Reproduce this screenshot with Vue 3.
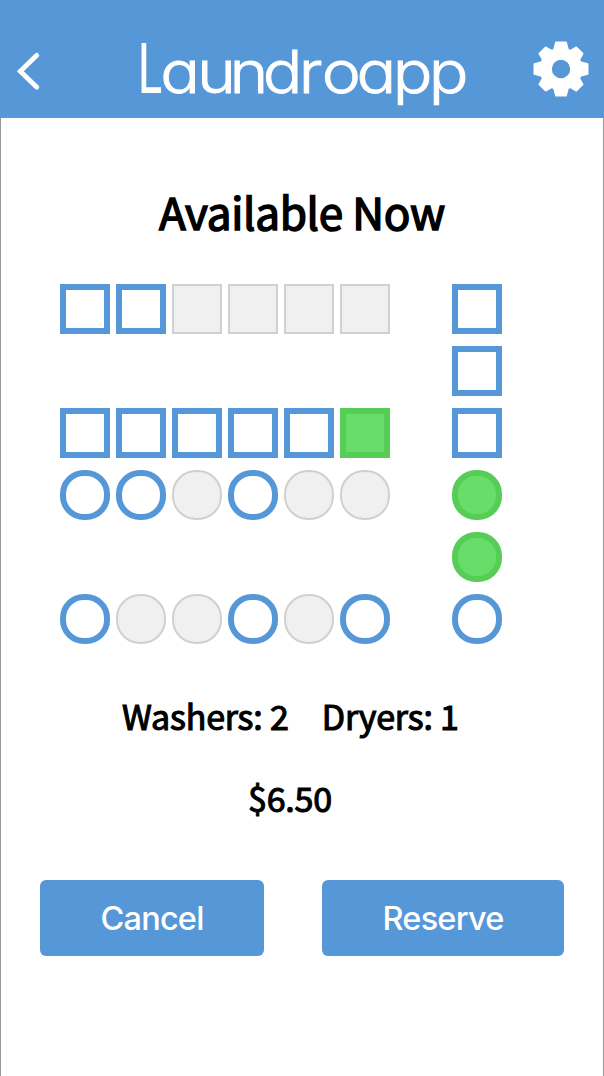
<script setup>
const machineRows = [
  { shape: 'square', states: ['open', 'open', 'busy', 'busy', 'busy', 'busy', 'gap', 'open'] },
  { shape: 'square', states: ['gap', 'gap', 'gap', 'gap', 'gap', 'gap', 'gap', 'open'] },
  { shape: 'square', states: ['open', 'open', 'open', 'open', 'open', 'picked', 'gap', 'open'] },
  { shape: 'round', states: ['open', 'open', 'busy', 'open', 'busy', 'busy', 'gap', 'picked'] },
  { shape: 'round', states: ['gap', 'gap', 'gap', 'gap', 'gap', 'gap', 'gap', 'picked'] },
  { shape: 'round', states: ['open', 'busy', 'busy', 'open', 'busy', 'open', 'gap', 'open'] },
]
</script>

<template>
  <div class="screen">
    <header class="bar">
      <svg class="back" width="24" height="40" viewBox="0 0 24 40">
        <path d="M20.8 4.3 L4.3 20.3 L20.8 36.3" />
      </svg>
      <svg class="logo" width="340" height="80" viewBox="0 0 340 80">
        <text class="cap" transform="translate(3.2 63) scale(0.69 1)">L</text>
        <text class="rest" transform="translate(0.8 62.8) scale(1.12 1)" x="22.7 55.6 84.6 114.3 146.4 167 197.9 230.3 262.5">aundroapp</text>
      </svg>
      <svg class="gear" width="56" height="56" viewBox="-84 -84 168 168">
        <path fill-rule="evenodd" d="M-21 -58 L-15 -80 L15 -80 L21 -58 L28 -55 L46 -65 L65 -46 L55 -28 L58 -21 L80 -15 L80 15 L58 21 L55 28 L65 46 L46 65 L28 55 L21 58 L15 80 L-15 80 L-21 58 L-28 55 L-46 65 L-65 46 L-55 28 L-58 21 L-80 15 L-80 -15 L-58 -21 L-55 -28 L-65 -46 L-46 -65 L-28 -55 Z M30 0 A30 30 0 1 0 -30 0 A30 30 0 1 0 30 0 Z" />
      </svg>
    </header>
    <main class="content">
      <h1>Available Now</h1>
      <div class="machines">
        <div v-for="(row, r) in machineRows" :key="r" class="row">
          <span v-for="(state, c) in row.states" :key="c" :class="['machine', row.shape, state]"></span>
        </div>
      </div>
      <div class="summary">
        <span>Washers: 2</span>
        <span>Dryers: 1</span>
      </div>
      <div class="price">$6.50</div>
      <div class="actions">
        <button class="cancel">Cancel</button>
        <button class="reserve">Reserve</button>
      </div>
    </main>
  </div>
</template>

<style>
body { margin: 0; background: #fff; }
</style>

<style scoped>
.screen {
  width: 604px;
  height: 1076px;
  display: flex;
  flex-direction: column;
  overflow: hidden;
  font-family: "Noto Sans CJK JP", "Noto Sans", sans-serif;
  color: #000;
}
.bar {
  height: 118px;
  flex: none;
  box-sizing: border-box;
  display: flex;
  align-items: flex-start;
  background: #5697d7;
}
.bar svg { display: block; flex: none; overflow: visible; }
.back { margin: 51px 0 0 16px; }
.back path { fill: none; stroke: #fff; stroke-width: 4.8; stroke-linecap: round; stroke-linejoin: miter; }
.logo { margin: 30px 0 0 94px; }
.logo text { fill: #fff; stroke: #fff; }
.logo .rest {
  font-family: Inter, sans-serif;
  font-size: 59px;
  font-weight: 300;
  font-feature-settings: "cv11" 1;
  stroke-width: 0.9px;
}
.logo .cap {
  font-family: Lato, sans-serif;
  font-size: 69px;
  font-weight: 400;
  stroke-width: 0;
}
.gear { margin: 41px 0 0 58.5px; }
.gear path { fill: #fff; stroke: #fff; stroke-width: 5; stroke-linejoin: round; }
.content {
  flex: 1;
  box-sizing: border-box;
  border: solid #999;
  border-width: 0 1px;
  display: flex;
  flex-direction: column;
}
h1 {
  margin: 63px 0 0;
  height: 60px;
  line-height: 60px;
  text-align: center;
  font-size: 44px;
  font-weight: 400;
  letter-spacing: -0.3px;
  -webkit-text-stroke: 1.5px #000;
}
.machines {
  display: flex;
  flex-direction: column;
  gap: 12px;
  margin: 43px 0 0 59px;
}
.row { display: flex; gap: 6px; }
.machine { box-sizing: border-box; width: 50px; height: 50px; }
.open { border: 6px solid #5697d7; }
.busy { border: 2px solid #d0d0d0; background: #f0f0f0; }
.picked { border: 6px solid #56cd56; background: #69dd69; }
.round { border-radius: 24px; }
.summary {
  display: flex;
  gap: 33px;
  margin: 47px 0 0 121px;
  height: 50px;
  line-height: 50px;
  font-size: 34px;
  font-weight: 400;
  letter-spacing: -0.2px;
  -webkit-text-stroke: 1.1px #000;
}
.price {
  margin: 32px 0 0 247px;
  height: 50px;
  line-height: 50px;
  font-size: 34px;
  font-weight: 400;
  letter-spacing: -0.2px;
  -webkit-text-stroke: 1.1px #000;
}
.actions {
  display: flex;
  gap: 58px;
  margin: 57px 0 0 39px;
}
button {
  height: 76px;
  padding: 2px 0 0;
  border: 0;
  border-radius: 6px;
  background: #5697d7;
  color: #fff;
  font: 500 32.5px/74px Inter, sans-serif;
  letter-spacing: -0.8px;
}
.cancel { width: 224px; }
.reserve { width: 242px; }
</style>
